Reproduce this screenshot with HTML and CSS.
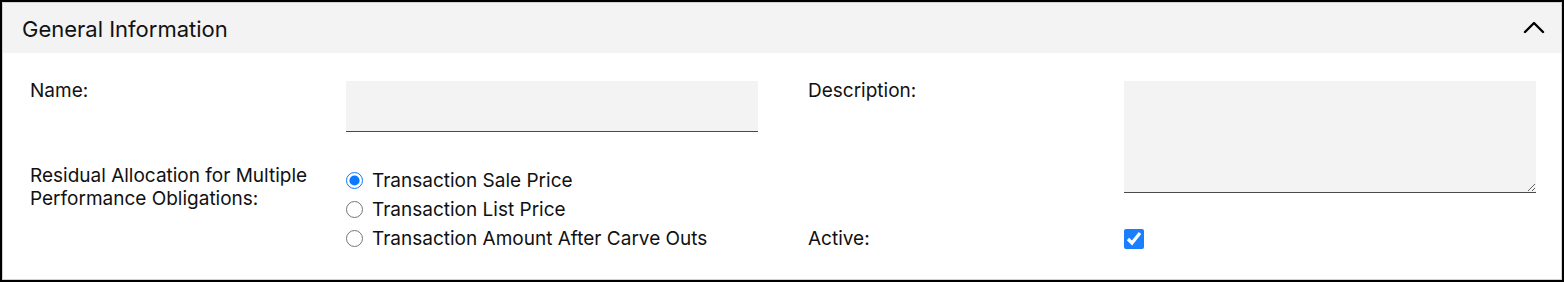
FILE: index.html
```html
<!DOCTYPE html>
<html lang="en">
<head>
<meta charset="utf-8">
<title>General Information</title>
<link rel="stylesheet" href="styles.css">
</head>
<body>
<div class="frame">
  <section class="panel">
    <header class="panel-header">
      <h2 class="panel-title">General Information</h2>
      <button class="collapse-btn" type="button" aria-label="Collapse">
        <svg width="22" height="14" viewBox="0 0 22 14"><polyline points="2,12 11,3 20,12" fill="none" stroke="#000" stroke-width="2.4" stroke-linecap="round" stroke-linejoin="round"/></svg>
      </button>
    </header>
    <div class="panel-body">
      <div class="form-col">
        <div class="form-row row-name">
          <label class="form-label" for="name">Name:</label>
          <input class="text-input" id="name" type="text">
        </div>
        <div class="form-row row-residual">
          <div class="form-label">Residual Allocation for Multiple Performance Obligations:</div>
          <div class="radio-group">
            <label class="radio-option"><input type="radio" name="alloc" checked><span>Transaction Sale Price</span></label>
            <label class="radio-option"><input type="radio" name="alloc"><span>Transaction List Price</span></label>
            <label class="radio-option"><input type="radio" name="alloc"><span>Transaction Amount After Carve Outs</span></label>
          </div>
        </div>
      </div>
      <div class="form-col">
        <div class="form-row row-desc">
          <label class="form-label" for="desc">Description:</label>
          <textarea class="text-area" id="desc"></textarea>
        </div>
        <div class="form-row row-active">
          <label class="form-label" for="active">Active:</label>
          <div class="check-wrap"><input class="checkbox" id="active" type="checkbox" checked></div>
        </div>
      </div>
    </div>
  </section>
</div>
</body>
</html>
```

FILE: styles.css
```css
* { box-sizing: border-box; }
html, body { margin: 0; padding: 0; }
body {
  font-family: Inter, "Noto Sans", "Liberation Sans", sans-serif;
  color: #111;
  background: #fff;
}
.frame {
  width: 1564px;
  height: 282px;
  border: 2px solid #000;
}
.panel {
  height: 100%;
  border: 1px solid #d2d2d2;
  background: #fff;
}
.panel-header {
  height: 50px;
  background: #f3f3f3;
  display: flex;
  align-items: center;
  justify-content: space-between;
  padding: 0 16px 0 19px;
}
.panel-title {
  margin: 0;
  font-size: 22px;
  font-weight: 400;
  color: #111;
  padding-top: 1px;
}
.collapse-btn {
  border: none;
  background: none;
  padding: 0;
  display: flex;
  margin-top: -3px;
}
.panel-body {
  display: grid;
  grid-template-columns: 727px 727px;
  column-gap: 51px;
  padding: 28px 26px 0 27px;
}
.form-col {
  display: flex;
  flex-direction: column;
}
.form-row {
  display: grid;
  grid-template-columns: 316px 411px;
  align-items: start;
}
.form-label {
  font-size: 19px;
  line-height: 23px;
  color: #111;
}
.row-name .form-label,
.row-desc .form-label { margin-top: -2px; }
.text-input {
  height: 51px;
  width: 412px;
  border: none;
  border-bottom: 1px solid #4a4a4a;
  background: #f3f3f3;
  outline: none;
  font: inherit;
}
.row-residual { margin-top: 33px; }
.row-residual .form-label { margin-top: -1px; }
.radio-group {
  display: flex;
  flex-direction: column;
  padding-top: 1px;
}
.radio-option {
  display: flex;
  align-items: center;
  height: 29px;
  font-size: 19px;
}
.radio-option input {
  width: 17px;
  height: 17px;
  margin: 0 9px 0 0;
  accent-color: #0a78ff;
}
.text-area {
  display: block;
  width: 412px;
  height: 112px;
  border: none;
  border-bottom: 1px solid #4a4a4a;
  background: #f3f3f3;
  resize: both;
  font: inherit;
  outline: none;
}
.row-active { margin-top: 34px; align-items: center; }
.check-wrap { display: flex; }
.checkbox {
  width: 20px;
  height: 20px;
  margin: 0;
  accent-color: #1a7fff;
}
```
